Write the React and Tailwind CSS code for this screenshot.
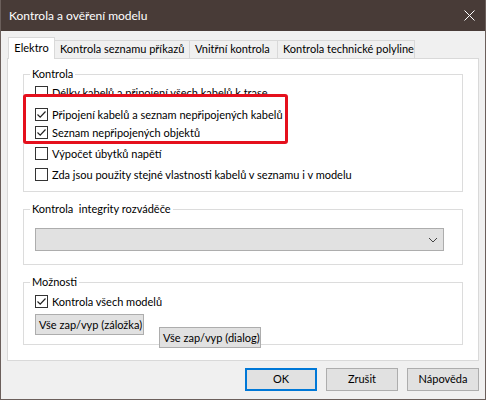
function Check({ checked }) {
  return (
    <span className="w-[13px] h-[13px] border border-[#333333] bg-white flex items-center justify-center shrink-0">
      {checked && (
        <svg width="11" height="11" viewBox="0 0 11 11">
          <path d="M1.5 5.5 L4.2 8.2 L9.5 2.5" fill="none" stroke="#222222" strokeWidth="1.2" />
        </svg>
      )}
    </span>
  );
}

function Row({ checked, label, className = "" }) {
  return (
    <div className={"flex items-center gap-[4px] h-[17px] " + className}>
      <Check checked={checked} />
      <span className="whitespace-nowrap leading-[17px]">{label}</span>
    </div>
  );
}

function Group({ title, className = "", children }) {
  return (
    <fieldset className={"relative mx-[15px] border border-[#dcdcdc] pl-[11px] " + className}>
      <legend className="-ml-[5px] px-[2px] leading-[14px] whitespace-pre">{title}</legend>
      {children}
    </fieldset>
  );
}

export default function App() {
  const tabs = [
    { label: "Kontrola seznamu příkazů", w: "w-[135px]" },
    { label: "Vnitřní kontrola", w: "w-[88px]" },
    { label: "Kontrola technické polyline", w: "w-[137px]" },
  ];

  return (
    <div className="w-[486px] h-[400px] bg-[#f0f0f0] border-x border-b border-[#6b5f5b] flex flex-col font-['Lato','Liberation_Sans',sans-serif] text-[11px] text-black overflow-hidden">
      {/* title bar */}
      <div className="h-[31px] bg-[#483b37] flex items-center justify-between pl-[9px] pr-[11px] text-white shrink-0 -mx-[1px]">
        <span className="text-[12px]">Kontrola a ověření modelu</span>
        <svg width="11" height="11" viewBox="0 0 11 11">
          <path d="M0.5 0.5 L10.5 10.5 M10.5 0.5 L0.5 10.5" stroke="#ffffff" strokeWidth="1" />
        </svg>
      </div>

      <div className="px-[6px] pt-[6px] flex flex-col">
        {/* tabs */}
        <div className="flex items-end h-[22px] ml-[1px] relative z-10 -mb-[1px]">
          <div className="w-[47px] h-[22px] bg-white border-x border-t border-[#d9d9d9] flex items-center justify-center pb-[1px]">
            Elektro
          </div>
          {tabs.map((t) => (
            <div
              key={t.label}
              className={t.w + " h-[19px] bg-[#f0f0f0] border border-l-0 border-[#d9d9d9] flex items-center pl-[5px] whitespace-nowrap"}
            >
              {t.label}
            </div>
          ))}
        </div>

        {/* tab panel */}
        <div className="h-[303px] bg-white border border-[#d9d9d9] pt-[8px]">
          <Group title="Kontrola" className="pb-[8px]">
            <div className="mt-[4px] h-[10px] overflow-hidden">
              <Row checked={false} label="Délky kabelů a připojení všech kabelů k trase" className="-mt-[1px]" />
            </div>
            <Row checked label="Připojení kabelů a seznam nepřipojených kabelů" className="mt-[11px]" />
            <Row checked label="Seznam nepřipojených objektů" className="mt-[1px]" />
            <Row checked={false} label="Výpočet úbytků napětí" className="mt-[4px]" />
            <Row checked={false} label="Zda jsou použity stejné vlastnosti kabelů v seznamu i v modelu" className="mt-[4px]" />
            <div className="absolute left-[-1px] top-[13px] w-[265px] h-[50px] border-[3px] border-[#e5101d] rounded-[3px] pointer-events-none" />
          </Group>

          <Group title="Kontrola  integrity rozváděče" className="mt-[10px] pb-[13px] pr-[18px]">
            <div className="mt-[12px] h-[23px] bg-[#e1e1e1] border border-[#adadad] flex items-center justify-end pr-[5px]">
              <svg width="10" height="6" viewBox="0 0 10 6">
                <path d="M1 1 L5 5 L9 1" fill="none" stroke="#444444" strokeWidth="1" />
              </svg>
            </div>
          </Group>

          <Group title="Možnosti" className="mt-[10px] pb-[9px]">
            <Row checked label="Kontrola všech modelů" className="mt-[4px]" />
            <button className="mt-[4px] w-[109px] h-[21px] bg-[#e1e1e1] border border-[#adadad] text-left pl-[3px] leading-[19px] whitespace-nowrap">
              Vše zap/vyp (záložka)
            </button>
            <button className="absolute left-[135px] top-[38px] w-[102px] h-[21px] bg-[#e1e1e1] border border-[#adadad] text-left pl-[3px] leading-[19px] whitespace-nowrap">
              Vše zap/vyp (dialog)
            </button>
          </Group>
        </div>

        {/* dialog buttons */}
        <div className="flex justify-end gap-[9px] mt-[7px]">
          <button className="w-[72px] h-[23px] bg-[#e1e1e1] border-2 border-[#0078d7]">OK</button>
          <button className="w-[72px] h-[23px] bg-[#e1e1e1] border border-[#adadad]">Zrušit</button>
          <button className="w-[72px] h-[23px] bg-[#e1e1e1] border border-[#adadad]">Nápověda</button>
        </div>
      </div>
    </div>
  );
}
